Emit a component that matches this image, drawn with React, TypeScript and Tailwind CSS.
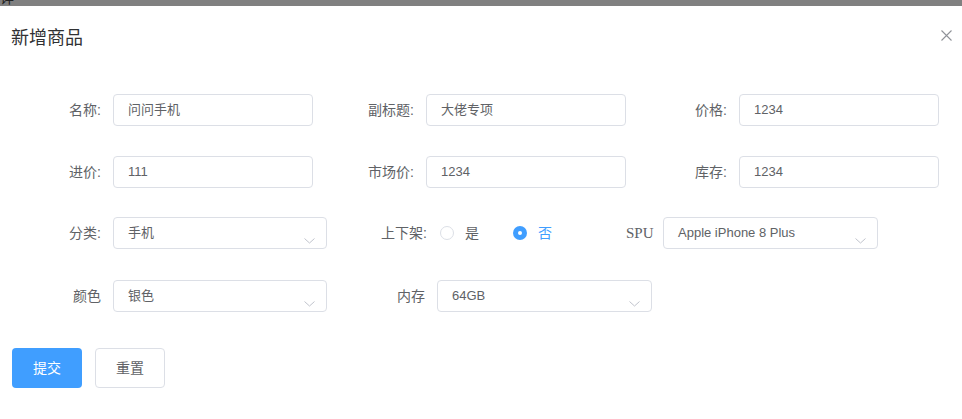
const font = { fontFamily: '"Liberation Sans", "Noto Sans CJK SC", sans-serif' }

function TextInput({ value, width }: { value: string; width: string }) {
  return (
    <div
      className={`${width} h-8 rounded border border-[#dcdfe6] bg-white pl-[14px] flex items-center text-[13px] text-[#606266]`}
    >
      {value}
    </div>
  )
}

function SelectBox({ value, width }: { value: string; width: string }) {
  return (
    <div
      className={`${width} relative h-8 rounded border border-[#dcdfe6] bg-white pl-[14px] flex items-center text-[13px] text-[#606266]`}
    >
      {value}
      <svg
        className="absolute right-[11px] top-[20px]"
        width="11"
        height="6"
        viewBox="0 0 11 6"
        fill="none"
      >
        <path d="M0.5 0.5 L5.5 5 L10.5 0.5" stroke="#c0c4cc" strokeWidth="1" />
      </svg>
    </div>
  )
}

function Label({ text, width }: { text: string; width: string }) {
  return <div className={`${width} shrink-0 text-right text-sm text-[#606266] pr-3`}>{text}</div>
}

function Field({ label, value }: { label: string; value: string }) {
  return (
    <div className="w-[313px] flex items-center">
      <Label text={label} width="w-[113px]" />
      <TextInput value={value} width="w-[200px]" />
    </div>
  )
}

function Radio({ label, checked }: { label: string; checked?: boolean }) {
  return (
    <div className="flex items-center">
      {checked ? (
        <span className="w-[14px] h-[14px] rounded-full bg-[#409eff] flex items-center justify-center">
          <span className="w-1 h-1 rounded-full bg-white" />
        </span>
      ) : (
        <span className="w-[14px] h-[14px] rounded-full border border-[#dcdfe6] bg-white" />
      )}
      <span className={`ml-[11px] text-sm ${checked ? 'text-[#409eff]' : 'text-[#606266]'}`}>{label}</span>
    </div>
  )
}

export default function App() {
  return (
    <div className="w-[962px] h-[419px] bg-white overflow-hidden" style={font}>
      <div className="h-[6px] bg-[#808080] overflow-hidden">
        <div className="text-sm leading-none -mt-[9px] text-[#222]">详</div>
      </div>

      <div className="relative pt-[20px] pl-[11px]">
        <h2 className="text-lg leading-6 text-[#303133]">新增商品</h2>
        <button className="absolute right-[10px] top-[23px] w-3 h-3 flex items-center justify-center">
          <svg width="11" height="11" viewBox="0 0 11 11">
            <path d="M0.5 0.5 L10.5 10.5 M10.5 0.5 L0.5 10.5" stroke="#909399" strokeWidth="1.1" />
          </svg>
        </button>
      </div>

      <form className="mt-[44px]">
        <div className="flex">
          <Field label="名称:" value="问问手机" />
          <Field label="副标题:" value="大佬专项" />
          <Field label="价格:" value="1234" />
        </div>

        <div className="flex mt-[30px]">
          <Field label="进价:" value="111" />
          <Field label="市场价:" value="1234" />
          <Field label="库存:" value="1234" />
        </div>

        <div className="flex items-center mt-[29px]">
          <div className="w-[327px] flex items-center">
            <Label text="分类:" width="w-[113px]" />
            <SelectBox value="手机" width="w-[214px]" />
          </div>
          <div className="w-[299px] flex items-center">
            <Label text="上下架:" width="w-[112px]" />
            <div className="flex items-center gap-[34px] -ml-[12px] pl-[13px]">
              <Radio label="是" />
              <Radio label="否" checked />
            </div>
          </div>
          <div className="flex items-center">
            <div
              className="w-[37px] text-[15px] text-[#606266]"
              style={{ fontFamily: '"Liberation Serif", serif' }}
            >
              SPU
            </div>
            <SelectBox value="Apple iPhone 8 Plus" width="w-[215px]" />
          </div>
        </div>

        <div className="flex items-center mt-[31px]">
          <div className="w-[327px] flex items-center">
            <Label text="颜色" width="w-[113px]" />
            <SelectBox value="银色" width="w-[214px]" />
          </div>
          <div className="flex items-center">
            <Label text="内存" width="w-[110px]" />
            <SelectBox value="64GB" width="w-[215px]" />
          </div>
        </div>

        <div className="flex gap-[13px] pl-3 mt-[36px]">
          <button
            type="button"
            className="w-[70px] h-10 rounded bg-[#409eff] text-white text-sm"
          >
            提交
          </button>
          <button
            type="button"
            className="w-[70px] h-10 rounded border border-[#dcdfe6] bg-white text-[#606266] text-sm"
          >
            重置
          </button>
        </div>
      </form>
    </div>
  )
}
